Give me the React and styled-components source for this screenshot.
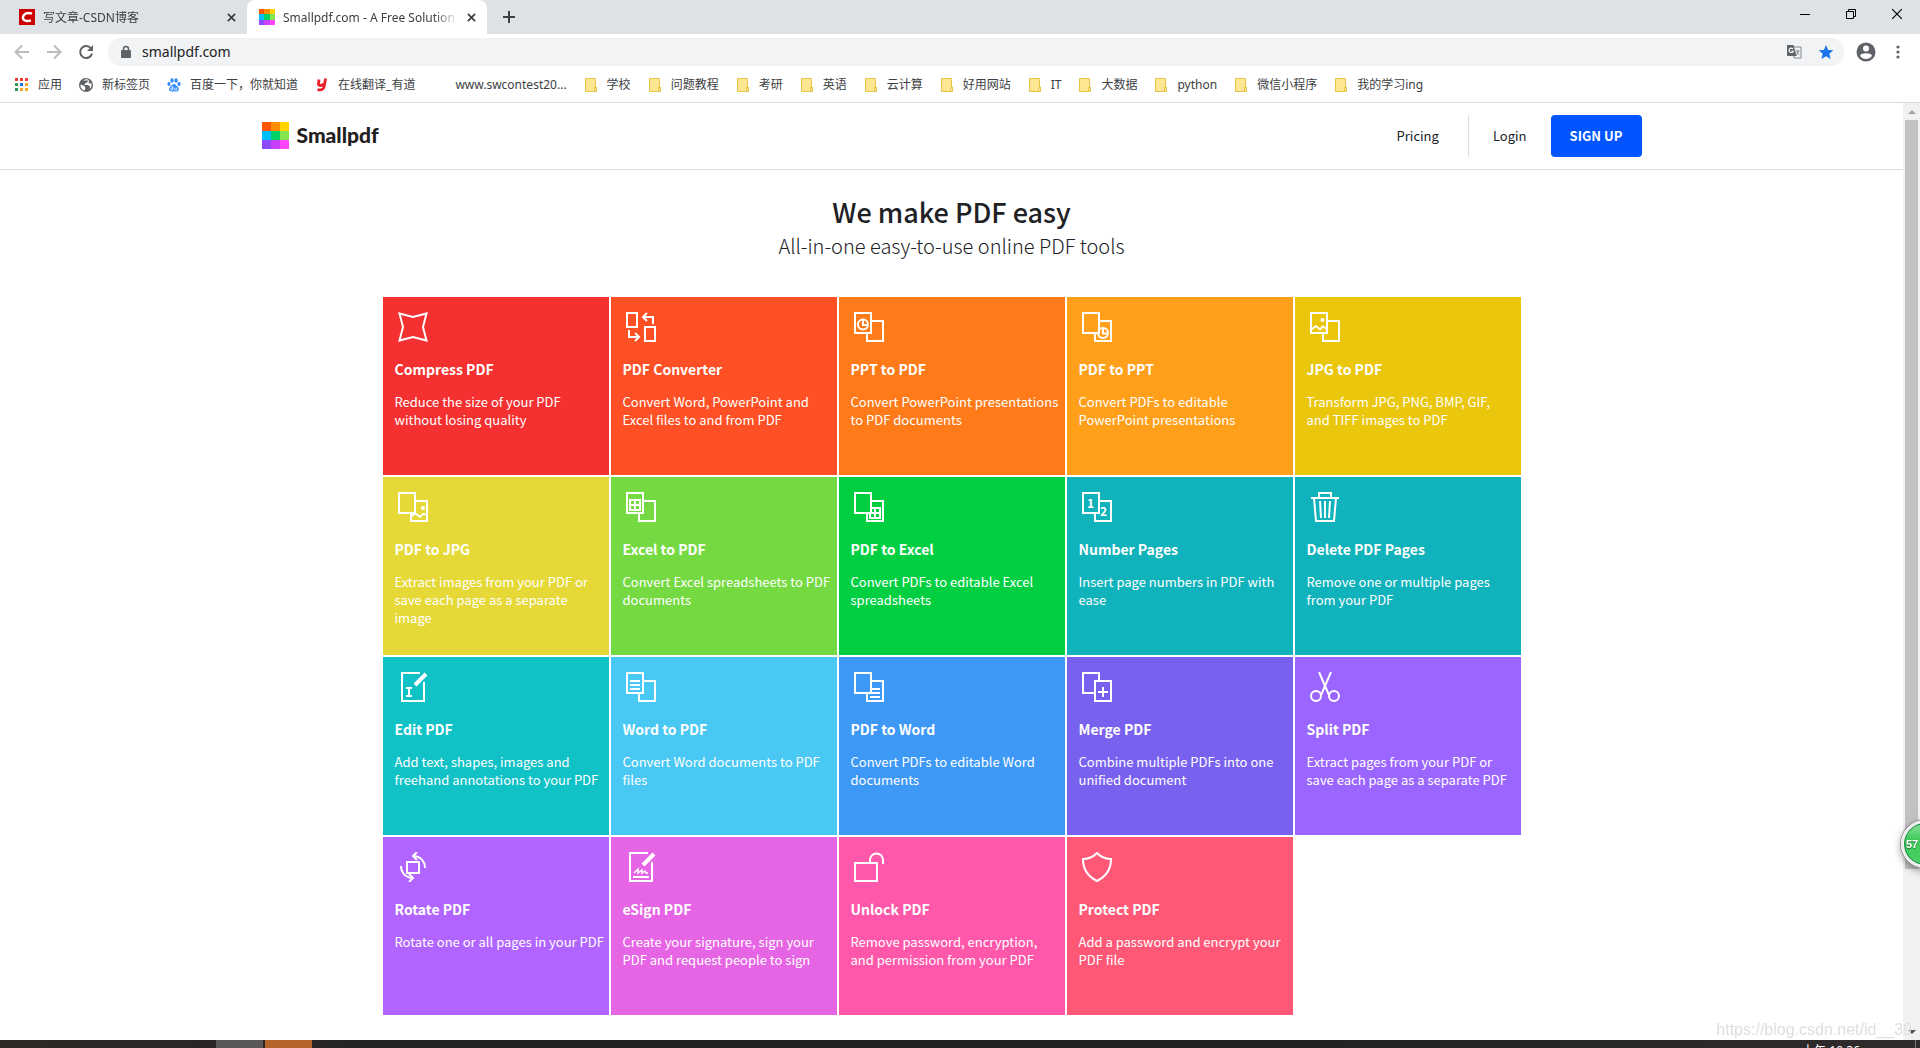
import React from "react";
import styled, { createGlobalStyle } from "styled-components";

const GlobalStyle = createGlobalStyle`
  * {
    box-sizing: border-box;
  }

  body {
    margin: 0;
    background: #fff;
    color: #202124;
    font-family: "Noto Sans CJK SC", "Open Sans", sans-serif;
  }

  a {
    color: inherit;
    text-decoration: none;
  }

  button {
    border: 0;
    padding: 0;
    background: none;
    color: inherit;
    font: inherit;
    cursor: pointer;
  }

  svg {
    display: block;
    flex: none;
  }
`;

const uiFont = `"Noto Sans", "Noto Sans CJK SC", sans-serif`;

const Window = styled.div`
  display: flex;
  flex-direction: column;
  height: 100vh;
  overflow: hidden;
`;

/* ---------- browser chrome ---------- */

const TabStrip = styled.div`
  display: flex;
  flex: none;
  height: 34px;
  padding-left: 7px;
  background: #dee1e6;
  color: #3c4043;
  font-family: ${uiFont};
  font-size: 12px;
`;

const Tab = styled.div`
  display: flex;
  align-items: center;
  width: 240px;
  padding: 0 11px 0 12px;
  gap: 8px;
  border-radius: 8px 8px 0 0;
  background: ${(props) => (props.$active ? "#fff" : "transparent")};
`;

const TabTitle = styled.span`
  flex: 1;
  padding-top: 2px;
  overflow: hidden;
  white-space: nowrap;
  line-height: 16px;
  mask-image: linear-gradient(to right, #000 85%, transparent);
`;

const NewTab = styled.button`
  display: flex;
  align-items: center;
  margin-left: 16px;
`;

const WindowButtons = styled.div`
  display: flex;
  margin-left: auto;

  button {
    display: flex;
    justify-content: center;
    width: 46px;
    height: 28px;
    align-items: center;
    color: #000;
  }
`;

const Toolbar = styled.div`
  display: flex;
  align-items: center;
  flex: none;
  height: 36px;
  padding: 0 16px 0 14px;
  gap: 16px;
  color: #5f6368;

  button {
    display: flex;
  }

  button:disabled {
    color: #babcbe;
  }
`;

const Omnibox = styled.form`
  display: flex;
  align-items: center;
  flex: 1;
  height: 28px;
  margin: 0 -4px 0 -2px;
  padding: 0 10px 0 12px;
  gap: 10px;
  border-radius: 14px;
  background: #f1f3f4;

  input {
    flex: 1;
    min-width: 0;
    border: 0;
    padding: 0 0 2px;
    outline: 0;
    background: none;
    color: #202124;
    font-family: ${uiFont};
    font-size: 14px;
  }

  button + button {
    margin-left: 6px;
  }
`;

const Bookmarks = styled.nav`
  display: flex;
  align-items: center;
  flex: none;
  height: 33px;
  padding: 0 14px 2px;
  gap: 16px;
  border-bottom: 1px solid #dadce0;
  color: #3c4043;
  font-family: ${uiFont};
  font-size: 12px;
  line-height: 16px;
`;

const Bookmark = styled.a`
  display: flex;
  align-items: center;
  gap: 8px;
  white-space: nowrap;

  svg,
  i {
    width: 16px;
    height: 16px;
  }
`;

/* ---------- page ---------- */

const Viewport = styled.div`
  display: flex;
  flex: 1;
  min-height: 0;
`;

const Page = styled.div`
  flex: 1;
  overflow: hidden;
`;

const Header = styled.header`
  border-bottom: 1px solid #dcdde0;
`;

const HeaderInner = styled.div`
  display: flex;
  align-items: center;
  max-width: 1380px;
  height: 66px;
  margin: 0 auto;
`;

const Logo = styled.a`
  display: flex;
  align-items: center;
  padding-bottom: 2px;
  gap: 8px;
  color: #1f2020;
  font-family: Lato, sans-serif;
  font-size: 21px;
  font-weight: 900;
  line-height: 24px;
`;

const Menu = styled.nav`
  display: flex;
  align-items: center;
  margin-left: auto;
  font-size: 13px;
  line-height: 42px;
`;

const Pricing = styled.a`
  padding-right: 29px;
  border-right: 1px solid #dcdde0;
`;

const Login = styled.a`
  padding: 0 24px;
`;

const SignUp = styled.button`
  width: 91px;
  height: 42px;
  border-radius: 4px;
  background: #0055ff;
  color: #fff;
  font-weight: 700;
`;

const Intro = styled.section`
  padding: 24px 0 35px;
  text-align: center;

  h1 {
    margin: 0;
    font-size: 27px;
    font-weight: 500;
    line-height: 36px;
  }

  p {
    margin: 0;
    font-size: 20px;
    font-weight: 300;
    line-height: 32px;
  }
`;

const Tools = styled.main`
  display: grid;
  grid-template-columns: repeat(5, 1fr);
  grid-auto-rows: 178px;
  gap: 2px;
  max-width: 1138px;
  margin: 0 auto;
`;

const Card = styled.a`
  padding: 15px 2px 0 12px;
  background: ${(props) => props.$color};
  color: #fff;

  svg {
    margin-left: 3px;
    fill: none;
    stroke: #fff;
    stroke-width: 2;
  }

  .front {
    fill: ${(props) => props.$color};
  }

  .solid {
    fill: #fff;
    stroke: none;
  }

  h2 {
    margin: 15px 0 12px;
    font-size: 14px;
    font-weight: 700;
    line-height: 24px;
  }

  p {
    margin: 0;
    font-size: 13px;
    line-height: 18px;
  }
`;

const ScrollBar = styled.div`
  display: flex;
  flex-direction: column;
  align-items: center;
  width: 17px;
  background: #f1f1f1;
`;

const Track = styled.div`
  flex: 1;
  width: 13px;
`;

const Thumb = styled.div`
  height: 83%;
  background: #c1c1c1;
`;

const Arrow = styled.span`
  display: flex;
  align-items: center;
  justify-content: center;
  height: 17px;
`;

const TaskBar = styled.footer`
  display: flex;
  flex: none;
  height: 8px;
  overflow: hidden;
  padding-left: 216px;
  gap: 2px;
  background: linear-gradient(to right, #2e2827, #222 30%, #242323 70%, #302b2c);
  color: #fff;
  font-family: ${uiFont};
  font-size: 12px;
  line-height: 16px;
`;

const Task = styled.span`
  width: 47px;
  background: ${(props) => props.$color};
`;

const Clock = styled.time`
  margin: 0 4px 0 auto;
  padding: 3px 55px 0 0;
  border-right: 1px solid #777;
`;

const SpeedBall = styled.div`
  position: fixed;
  right: -29px;
  top: 820px;
  width: 48px;
  height: 48px;
  padding-left: 2px;
  border: 3px solid #eee;
  border-radius: 50%;
  background: linear-gradient(#8be29a, #3fc95a 40%, #4bd065);
  box-shadow: 0 0 0 1px #8b8b8b, inset 0 0 0 1px #168048, 0 3px 8px #0006;
  color: #fff;
  font-family: "Liberation Sans", sans-serif;
  font-size: 11px;
  font-weight: 700;
  line-height: 42px;
  text-shadow: 0 1px 1px #1c6b31;
`;

const Watermark = styled.div`
  position: fixed;
  right: 8px;
  bottom: 8px;
  color: #dedede;
  font-family: "Liberation Sans", sans-serif;
  font-size: 16px;
  line-height: 20px;
`;

/* ---------- icons ---------- */

const SmallpdfMark = ({ width, height }) => (
  <svg width={width} height={height} viewBox="0 0 27 27" preserveAspectRatio="none" shapeRendering="crispEdges">
    <path fill="#ff5500" d="M0 0h9v9H0z" />
    <path fill="#ff8e00" d="M9 0h9v9H9z" />
    <path fill="#ffd200" d="M18 0h9v9h-9z" />
    <path fill="#00bfff" d="M0 9h9v9H0z" />
    <path fill="#00d267" d="M9 9h9v9H9z" />
    <path fill="#84e64e" d="M18 9h9v9h-9z" />
    <path fill="#8e49ff" d="M0 18h9v9H0z" />
    <path fill="#c740fb" d="M9 18h9v9H9z" />
    <path fill="#ff46fb" d="M18 18h9v9h-9z" />
  </svg>
);

const CsdnMark = () => (
  <svg width="16" height="16" viewBox="0 0 16 16">
    <path fill="#c00" d="M0 0h16v16H0z" />
    <path
      d="M13 4.600C9 3.200 4.800 4 4 8c-.6 4 4 4.600 8 3.300"
      fill="none"
      stroke="#fff"
      strokeWidth="2.400"
    />
  </svg>
);

const CloseMark = ({ size = 9, width = 2 }) => (
  <svg width={size} height={size} viewBox="0 0 10 10">
    <path d="M1 1l8 8M9 1l-8 8" stroke="currentColor" strokeWidth={width} />
  </svg>
);

const FolderIcon = () => (
  <svg viewBox="0 0 16 16">
    <path d="M2.500 1.500h10V10h1v4.500h-11z" fill="#ffe693" stroke="#e6c34a" />
    <path d="M11.500 14.500V10.500h2" fill="none" stroke="#e6c34a" />
  </svg>
);

const appColors = ["#f23b3b", "#f23b3b", "#f23b3b", "#2c9a5b", "#1a73e8", "#f5a623", "#2c9a5b", "#f5a623", "#f5a623"];

const AppsIcon = () => (
  <svg viewBox="0 0 16 16">
    {appColors.map((color, i) => (
      <rect key={i} x={1 + (i % 3) * 5} y={1 + Math.floor(i / 3) * 5} width="3" height="3" fill={color} />
    ))}
  </svg>
);

const GlobeIcon = () => (
  <svg viewBox="0 0 16 16">
    <circle cx="8" cy="8" r="7" fill="#5f6368" />
    <path
      d="M2.500 7.500l4 1.500 1 2-1 2.500C4 12.800 2 10.500 2.500 7.500zM5 3.500L8.500 2l2 1-1 2L7 6.500 6.500 8H10l2 1.500-.5 2.500c2-1.500 2.500-4 1.800-6l-1.800.5-1-1 1-2"
      fill="#fff"
    />
  </svg>
);

const BaiduIcon = () => (
  <svg viewBox="0 0 16 16" fill="#2f88ff">
    <ellipse cx="3" cy="7" rx="1.600" ry="2.100" />
    <ellipse cx="6" cy="3.500" rx="1.600" ry="2.200" />
    <ellipse cx="10" cy="3.500" rx="1.600" ry="2.200" />
    <ellipse cx="13" cy="7" rx="1.600" ry="2.100" />
    <path d="M8 7c1.500 0 2.200 1.500 3.500 2.600 2.300 2 1.500 5-1 5-1 0-1.500-.3-2.500-.3s-1.500.3-2.500.3c-2.500 0-3.300-3-1-5C5.800 8.500 6.500 7 8 7z" />
    <path d="M6.800 9v4H5.500c-1 0-1-2 0-2h1.300M8.800 10.500V13h2v-2.500" fill="none" stroke="#fff" strokeWidth=".8" />
  </svg>
);

const YoudaoIcon = () => (
  <svg viewBox="0 0 16 16">
    <path
      d="M5 2.500L4.400 7c-.2 2 3.600 2 5.400 0M11.600 1.500L10 10c-.4 2.400-2.500 3.600-6.500 2.600"
      fill="none"
      stroke="#e8202a"
      strokeWidth="2.800"
    />
  </svg>
);

const TranslateIcon = () => (
  <svg width="16" height="16" viewBox="0 0 16 16">
    <path d="M6 3h9v11H8z" fill="#f1f3f4" stroke="#85888c" />
    <path d="M1 1h6.500l3 11H2a1 1 0 0 1-1-1z" fill="#5f6368" />
    <path d="M7 5a2.200 2.200 0 1 0 .3 2.200H5.400" fill="none" stroke="#fff" strokeWidth="1.100" />
    <path d="M9.500 7h4M11.500 6v1M12.800 7c-.5 2-1.500 3-2.500 3.500M10.500 8l2.700 3" fill="none" stroke="#85888c" />
  </svg>
);

const BackPage = () => <rect x="13" y="9" width="16" height="20" />;
const FrontPage = () => <rect className="front" x="1" y="1" width="16" height="20" />;

const icons = {
  compress: <path d="M1.500 1.500L15 5l13.500-3.500L25 15l3.500 13.500L15 25 1.500 28.500 5 15z" />,
  converter: (
    <>
      <rect x="1" y="1" width="10" height="14" />
      <rect x="19" y="15" width="10" height="14" />
      <path d="M27 12V5H17M21 1l-4 4 4 4M3 18v7h10M9 21l4 4-4 4" />
    </>
  ),
  pptToPdf: (
    <>
      <BackPage />
      <FrontPage />
      <circle cx="9" cy="12.500" r="5" />
      <path d="M9 8v5h4.500" />
    </>
  ),
  pdfToPpt: (
    <>
      <BackPage />
      <circle cx="21" cy="21" r="5" />
      <path d="M21 16.500v5h4.500" />
      <FrontPage />
    </>
  ),
  jpgToPdf: (
    <>
      <BackPage />
      <FrontPage />
      <path d="M2 17l4-3 4 3.500 3-3 4 2.500" />
      <circle className="solid" cx="12.500" cy="8" r="2" />
    </>
  ),
  pdfToJpg: (
    <>
      <BackPage />
      <path d="M13 25l4-4 5 4 3-3 4 .5" />
      <circle className="solid" cx="25" cy="16" r="2" />
      <FrontPage />
    </>
  ),
  excelToPdf: (
    <>
      <BackPage />
      <FrontPage />
      <path d="M4 8h10v10H4zM9 8v10M4 13h10" />
    </>
  ),
  pdfToExcel: (
    <>
      <BackPage />
      <path d="M16 16h10v10H16zM21 16v10M16 21h10" />
      <FrontPage />
    </>
  ),
  number: (
    <>
      <BackPage />
      <FrontPage />
      <g className="solid" fontSize="12" fontWeight="700">
        <text x="5" y="16">1</text>
        <text x="18" y="24">2</text>
      </g>
    </>
  ),
  trash: (
    <>
      <path d="M1 6h28M9 6V1h12v5M4 6l2 23h18l2-23" />
      <path d="M10 9l1 17M15 9v17M20 9l-1 17" />
    </>
  ),
  edit: (
    <>
      <path d="M22 1H4v28h22V10" />
      <path d="M17 13L28 2" strokeWidth="4" />
      <path d="M8 16h6M8 24h6M11 16v8" />
    </>
  ),
  wordToPdf: (
    <>
      <BackPage />
      <FrontPage />
      <path d="M4 9h10M4 13h10M4 17h10" />
    </>
  ),
  pdfToWord: (
    <>
      <BackPage />
      <path d="M16 17h10M16 21h10M16 25h10" />
      <FrontPage />
    </>
  ),
  merge: (
    <>
      <FrontPage />
      <rect className="front" x="13" y="9" width="16" height="20" />
      <path d="M16 20h10M21 15v10" />
    </>
  ),
  split: (
    <>
      <circle cx="6" cy="24" r="5" />
      <circle cx="24" cy="24" r="5" />
      <path d="M9 0l6 14 4 9M21 0l-6 14-4 9" />
    </>
  ),
  rotate: (
    <>
      <rect x="9" y="10" width="12" height="11" />
      <path d="M15 4c7 0 12 5 12 12M19 0l-4 4 4 4M3 14c0 7 5 12 12 12M11 22l4 4-4 4" />
    </>
  ),
  sign: (
    <>
      <path d="M22 1H4v28h22V10" />
      <path d="M17 13L28 2" strokeWidth="4" />
      <path d="M7 25h16" />
      <path d="M8 21l4-4v4l4-3v3l3-2 1 2h2" strokeWidth="1.500" />
    </>
  ),
  unlock: <path d="M1 11h22v18H1zM16 11V8a6 6 0 0 1 13 0v4" />,
  shield: <path d="M15 1c4 4 9 6 14 6 0 10-4 17-14 22C5 24 1 17 1 7c5 0 10-2 14-6z" />,
};

/* ---------- data ---------- */

const bookmarks = [
  { text: "应用", icon: <AppsIcon /> },
  { text: "新标签页", icon: <GlobeIcon /> },
  { text: "百度一下，你就知道", icon: <BaiduIcon /> },
  { text: "在线翻译_有道", icon: <YoudaoIcon /> },
  { text: "www.swcontest20...", icon: <i /> },
  { text: "学校" },
  { text: "问题教程" },
  { text: "考研" },
  { text: "英语" },
  { text: "云计算" },
  { text: "好用网站" },
  { text: "IT" },
  { text: "大数据" },
  { text: "python" },
  { text: "微信小程序" },
  { text: "我的学习ing" },
];

const tools = [
  { title: "Compress PDF", text: "Reduce the size of your PDF without losing quality", color: "#f43030", icon: "compress" },
  { title: "PDF Converter", text: "Convert Word, PowerPoint and Excel files to and from PDF", color: "#ff4f24", icon: "converter" },
  { title: "PPT to PDF", text: "Convert PowerPoint presentations to PDF documents", color: "#ff7b1a", icon: "pptToPdf" },
  { title: "PDF to PPT", text: "Convert PDFs to editable PowerPoint presentations", color: "#ff9f1a", icon: "pdfToPpt" },
  { title: "JPG to PDF", text: "Transform JPG, PNG, BMP, GIF, and\u00a0TIFF images to PDF", color: "#eac60c", icon: "jpgToPdf" },
  { title: "PDF to JPG", text: "Extract images from your PDF or save each page as a separate image", color: "#e5d837", icon: "pdfToJpg" },
  { title: "Excel to PDF", text: "Convert Excel spreadsheets to PDF documents", color: "#75da41", icon: "excelToPdf" },
  { title: "PDF to Excel", text: "Convert PDFs to editable Excel spreadsheets", color: "#00cf42", icon: "pdfToExcel" },
  { title: "Number Pages", text: "Insert page numbers in PDF with ease", color: "#10b2bb", icon: "number" },
  { title: "Delete PDF Pages", text: "Remove one or multiple pages from your PDF", color: "#10b2bb", icon: "trash" },
  { title: "Edit PDF", text: "Add text, shapes, images and freehand annotations to your PDF", color: "#10c1c6", icon: "edit" },
  { title: "Word to PDF", text: "Convert Word documents to PDF files", color: "#4ac8f4", icon: "wordToPdf" },
  { title: "PDF to Word", text: "Convert PDFs to editable Word documents", color: "#3e98f6", icon: "pdfToWord" },
  { title: "Merge PDF", text: "Combine multiple PDFs into one unified document", color: "#7961f0", icon: "merge" },
  { title: "Split PDF", text: "Extract pages from your PDF or save each page as a separate PDF", color: "#9b65ff", icon: "split" },
  { title: "Rotate PDF", text: "Rotate one or all pages in your PDF", color: "#b164ff", icon: "rotate" },
  { title: "eSign PDF", text: "Create your signature, sign your PDF and request people to sign", color: "#e665e5", icon: "sign" },
  { title: "Unlock PDF", text: "Remove password, encryption, and\u00a0permission from your PDF", color: "#ff57a9", icon: "unlock" },
  { title: "Protect PDF", text: "Add a password and encrypt your PDF file", color: "#ff5876", icon: "shield" },
];

const BrowserTabs = () => (
  <TabStrip>
    <Tab>
      <CsdnMark />
      <TabTitle>写文章-CSDN博客</TabTitle>
      <button aria-label="Close tab">
        <CloseMark />
      </button>
    </Tab>
    <Tab $active>
      <SmallpdfMark width={16} height={16} />
      <TabTitle>Smallpdf.com - A Free Solution</TabTitle>
      <button aria-label="Close tab">
        <CloseMark />
      </button>
    </Tab>
    <NewTab aria-label="New tab">
      <svg width="12" height="12" viewBox="0 0 12 12">
        <path d="M6 0v12M0 6h12" stroke="currentColor" strokeWidth="2" />
      </svg>
    </NewTab>
    <WindowButtons>
      <button aria-label="Minimize">
        <svg width="10" height="10" viewBox="0 0 10 10" shapeRendering="crispEdges">
          <path d="M0 5h10v1H0z" />
        </svg>
      </button>
      <button aria-label="Restore">
        <svg width="10" height="10" viewBox="0 0 10 10" fill="none" stroke="currentColor">
          <path d="M.5 2.500h7v7h-7zM2.500 2.500v-2h7v7h-2" />
        </svg>
      </button>
      <button aria-label="Close">
        <CloseMark size={12} width={1} />
      </button>
    </WindowButtons>
  </TabStrip>
);

const AddressBar = () => (
  <Toolbar>
    <button disabled aria-label="Back">
      <svg width="16" height="16" viewBox="0 0 16 16" fill="none" stroke="currentColor" strokeWidth="2">
        <path d="M15 8H2M8 1.500L1.500 8 8 14.500" />
      </svg>
    </button>
    <button disabled aria-label="Forward">
      <svg width="16" height="16" viewBox="0 0 16 16" fill="none" stroke="currentColor" strokeWidth="2">
        <path d="M1 8h13M8 1.500L14.500 8 8 14.500" />
      </svg>
    </button>
    <button aria-label="Reload">
      <svg width="16" height="16" viewBox="0 0 16 16">
        <path d="M13 4.500A6 6 0 1 0 14 9.500" fill="none" stroke="currentColor" strokeWidth="2" />
        <path d="M15 1v6H9z" fill="currentColor" />
      </svg>
    </button>
    <Omnibox>
      <svg width="12" height="14" viewBox="0 0 12 14">
        <path d="M2 5h8a1 1 0 0 1 1 1v6a1 1 0 0 1-1 1H2a1 1 0 0 1-1-1V6a1 1 0 0 1 1-1z" fill="currentColor" />
        <path d="M3.500 6V4a2.500 2.500 0 0 1 5 0v2" fill="none" stroke="currentColor" strokeWidth="1.500" />
      </svg>
      <input type="text" aria-label="Address" defaultValue="smallpdf.com" />
      <button type="button" aria-label="Translate">
        <TranslateIcon />
      </button>
      <button type="button" aria-label="Bookmark">
        <svg width="16" height="16" viewBox="0 0 16 16">
          <path d="M8 1l2.100 4.900 5.200.4-4 3.500 1.300 5.200L8 12.200 3.400 15l1.300-5.200-4-3.500 5.200-.4z" fill="#1a73e8" />
        </svg>
      </button>
    </Omnibox>
    <button aria-label="Profile">
      <svg width="20" height="20" viewBox="0 0 20 20">
        <circle cx="10" cy="10" r="9.500" fill="currentColor" />
        <circle cx="10" cy="6.500" r="3" fill="#fff" />
        <path d="M4 13.500c1.500-3 10.500-3 12 0-1.500 4.500-10.500 4.500-12 0z" fill="#fff" />
      </svg>
    </button>
    <button aria-label="Menu">
      <svg width="12" height="14" viewBox="0 0 12 14" fill="currentColor">
        <circle cx="6" cy="2" r="1.600" />
        <circle cx="6" cy="7" r="1.600" />
        <circle cx="6" cy="12" r="1.600" />
      </svg>
    </button>
  </Toolbar>
);

const App = () => {
  return (
    <Window>
      <GlobalStyle />
      <BrowserTabs />
      <AddressBar />
      <Bookmarks>
        {bookmarks.map(({ text, icon }) => (
          <Bookmark href="#none" key={text}>
            {icon || <FolderIcon />}
            <span>{text}</span>
          </Bookmark>
        ))}
      </Bookmarks>
      <Viewport>
        <Page>
          <Header>
            <HeaderInner>
              <Logo href="#none">
                <SmallpdfMark width={27} height={27} />
                Smallpdf
              </Logo>
              <Menu>
                <Pricing href="#none">Pricing</Pricing>
                <Login href="#none">Login</Login>
                <SignUp>SIGN UP</SignUp>
              </Menu>
            </HeaderInner>
          </Header>
          <Intro>
            <h1>We make PDF easy</h1>
            <p>All-in-one easy-to-use online PDF tools</p>
          </Intro>
          <Tools>
            {tools.map(({ title, text, color, icon }) => (
              <Card href="#none" key={title} $color={color}>
                <svg width="30" height="30" viewBox="0 0 30 30">
                  {icons[icon]}
                </svg>
                <h2>{title}</h2>
                <p>{text}</p>
              </Card>
            ))}
          </Tools>
        </Page>
        <ScrollBar>
          <Arrow>
            <svg width="8" height="4" viewBox="0 0 8 4">
              <path d="M0 4l4-4 4 4z" fill="#a3a3a3" />
            </svg>
          </Arrow>
          <Track>
            <Thumb />
          </Track>
          <Arrow>
            <svg width="8" height="4" viewBox="0 0 8 4">
              <path d="M0 0l4 4 4-4z" fill="#505050" />
            </svg>
          </Arrow>
        </ScrollBar>
      </Viewport>
      <TaskBar>
        <Task $color="#5a5757" />
        <Task $color="#b5652a" />
        <Clock>上午 10:26</Clock>
      </TaskBar>
      <SpeedBall>57</SpeedBall>
      <Watermark>https://blog.csdn.net/id__39</Watermark>
    </Window>
  );
};

export default App;
